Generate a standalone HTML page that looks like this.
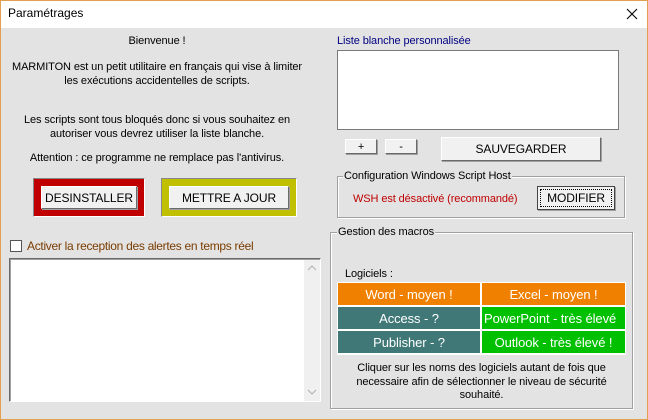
<!DOCTYPE html>
<html><head><meta charset="utf-8"><style>
*{margin:0;padding:0;box-sizing:border-box}
body{width:648px;height:420px;background:#e3e3e3;font-family:"Liberation Sans",sans-serif;font-size:11px;color:#000;position:relative;overflow:hidden;letter-spacing:-0.1px}
.a{position:absolute;white-space:nowrap}
.c{text-align:center}
.btn{position:absolute;background:#f1f1f1;border:1px solid;border-color:#fff #6a6a6a #6a6a6a #fff;box-shadow:1px 1px 0 #a0a0a0;display:flex;align-items:center;justify-content:center}
.cell{position:absolute;color:#fff;font-size:13px;display:flex;align-items:center;justify-content:center;overflow:hidden;white-space:nowrap}
.grp{position:absolute;border:1px solid #a0a0a0;box-shadow:inset 1px 1px 0 #fff,1px 1px 0 #fff}
.lab{position:absolute;background:#e3e3e3;padding:0 1px;white-space:nowrap}
</style></head><body>
<div class="a" style="left:0;top:0;width:648px;height:28px;background:#fff;border-top:1px solid #e0a050"></div>
<div class="a" style="left:0;top:0;width:1px;height:420px;background:#e0a050"></div>
<div class="a" style="right:0;top:0;width:1px;height:420px;background:#e0a050"></div>
<div class="a" style="left:0;bottom:0;width:648px;height:1px;background:#e0a050"></div>
<div class="a" style="left:8px;top:6px;font-size:12px;letter-spacing:0">Paramétrages</div>
<svg class="a" style="left:626px;top:8px" width="12" height="12"><path d="M1 1L11 11M11 1L1 11" stroke="#000" stroke-width="1.1"/></svg>

<div class="a c" style="left:0;width:314px;top:35px">Bienvenue !</div>
<div class="a c" style="left:0;width:314px;top:60px;line-height:14px">MARMITON est un petit utilitaire en français qui vise à limiter<br>les exécutions accidentelles de scripts.</div>
<div class="a c" style="left:0;width:314px;top:113px;line-height:14px">Les scripts sont tous bloqués donc si vous souhaitez en<br>autoriser vous devrez utiliser la liste blanche.</div>
<div class="a c" style="left:0;width:314px;top:152px">Attention : ce programme ne remplace pas l'antivirus.</div>

<div class="a" style="left:33px;top:178px;width:112px;height:39px;background:#c00000;border:1px solid;border-color:#888 #fff #fff #888"></div>
<div class="btn" style="left:41px;top:186px;width:96px;height:23px;font-size:12px">DESINSTALLER</div>
<div class="a" style="left:161px;top:178px;width:136px;height:39px;background:#c0c000;border:1px solid;border-color:#888 #fff #fff #888"></div>
<div class="btn" style="left:169px;top:186px;width:120px;height:23px;font-size:12px">METTRE A JOUR</div>

<div class="a" style="left:10px;top:240px;width:12px;height:12px;background:#fff;border:1px solid #555"></div>
<div class="a" style="left:27px;top:239px;color:#7a3c00;font-size:12px;letter-spacing:-0.3px">Activer la reception des alertes en temps réel</div>
<div class="a" style="left:9px;top:258px;width:312px;height:144px;background:#fff;border:1px solid;border-color:#6a6a6a #fff #fff #6a6a6a;box-shadow:inset 1px 1px 0 #a0a0a0"></div>
<div class="a" style="left:304px;top:260px;width:16px;height:141px;background:#f0f0f0"></div>
<svg class="a" style="left:307px;top:265px" width="10" height="6"><path d="M1 5L5 1L9 5" stroke="#b0b0b0" fill="none"/></svg>
<svg class="a" style="left:307px;top:389px" width="10" height="6"><path d="M1 1L5 5L9 1" stroke="#b0b0b0" fill="none"/></svg>

<div class="a" style="left:337px;top:35px;color:#000080">Liste blanche personnalisée</div>
<div class="a" style="left:337px;top:50px;width:282px;height:80px;background:#fff;border:1px solid #7a7a7a"></div>
<div class="btn" style="left:345px;top:139px;width:32px;height:15px">+</div>
<div class="btn" style="left:385px;top:139px;width:32px;height:15px">-</div>
<div class="btn" style="left:441px;top:137px;width:160px;height:24px;font-size:12px">SAUVEGARDER</div>

<div class="grp" style="left:337px;top:176px;width:288px;height:42px"></div>
<div class="lab" style="left:343px;top:170px;font-size:11px">Configuration Windows Script Host</div>
<div class="a" style="left:353px;top:193px;color:#c00000;font-size:11px">WSH est désactivé (recommandé)</div>
<div class="btn" style="left:537px;top:186px;width:78px;height:24px;border:1px solid #444;font-size:12px"><span style="border:1px dotted #000;padding:1px 6px">MODIFIER</span></div>

<div class="grp" style="left:330px;top:232px;width:303px;height:177px"></div>
<div class="lab" style="left:337px;top:226px;font-size:11px">Gestion des macros</div>
<div class="a" style="left:345px;top:268px">Logiciels :</div>
<div class="a" style="left:337px;top:282px;width:289px;height:73px;background:#fff"></div>
<div class="cell" style="left:338px;top:283px;width:142px;height:22px;background:#f08000">Word - moyen !</div>
<div class="cell" style="left:482px;top:283px;width:143px;height:22px;background:#f08000">Excel - moyen !</div>
<div class="cell" style="left:338px;top:307px;width:142px;height:22px;background:#407878">Access - ?</div>
<div class="cell" style="left:482px;top:307px;width:143px;height:22px;background:#00c000;justify-content:flex-start;padding-left:2px">PowerPoint - très élevé</div>
<div class="cell" style="left:338px;top:331px;width:142px;height:22px;background:#407878">Publisher - ?</div>
<div class="cell" style="left:482px;top:331px;width:143px;height:22px;background:#00c000">Outlook - très élevé !</div>
<div class="a c" style="left:330px;width:303px;top:362px;line-height:13.5px">Cliquer sur les noms des logiciels autant de fois que<br>necessaire afin de sélectionner le niveau de sécurité<br>souhaité.</div>
</body></html>
